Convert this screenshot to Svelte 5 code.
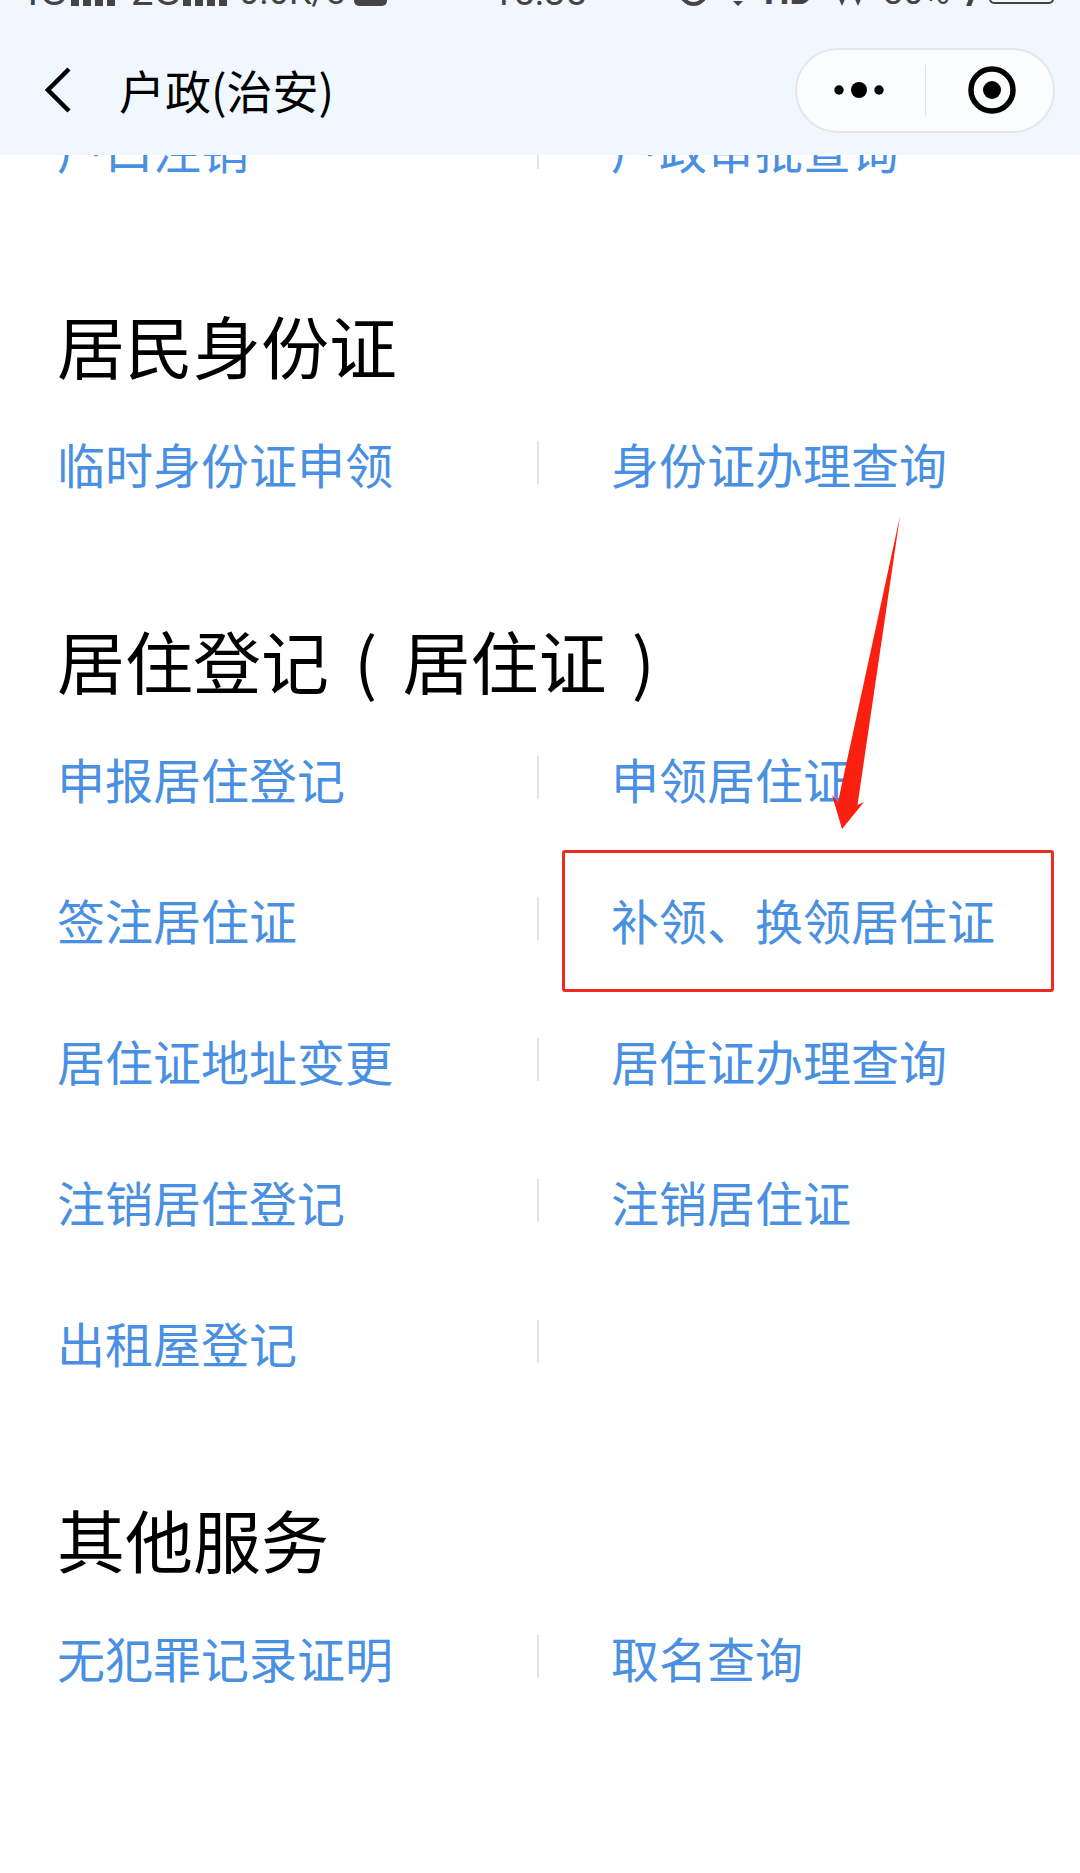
<script>
  const sections = [
    { title: '居民身份证', rows: [['临时身份证申领', '身份证办理查询']] },
    {
      title: '居住登记 ( 居住证 )',
      rows: [
        ['申报居住登记', '申领居住证'],
        ['签注居住证', '补领、换领居住证'],
        ['居住证地址变更', '居住证办理查询'],
        ['注销居住登记', '注销居住证'],
        ['出租屋登记', '']
      ]
    },
    { title: '其他服务', rows: [['无犯罪记录证明', '取名查询']] }
  ];
</script>

<div class="page">
  <header class="head">
    <div class="status">
      <span class="t4g">4G</span>
      <svg class="sig s1" viewBox="0 0 44 30"><rect x="0" y="18" width="8" height="12"/><rect x="12" y="12" width="8" height="18"/><rect x="24" y="6" width="8" height="24"/><rect x="36" y="0" width="8" height="30"/></svg>
      <span class="t2g">2G</span>
      <svg class="sig s2" viewBox="0 0 44 30"><rect x="0" y="18" width="8" height="12"/><rect x="12" y="12" width="8" height="18"/><rect x="24" y="6" width="8" height="24"/><rect x="36" y="0" width="8" height="30"/></svg>
      <span class="speed">0.0K/s</span>
      <span class="chip"></span>
      <span class="clock">15:35</span>
      <span class="ring"></span>
      <svg class="bell" viewBox="0 0 28 30"><path d="M14 0 C6 0 6 8 5 16 L0 22 L28 22 L23 16 C22 8 22 0 14 0 Z M9 25 L19 25 L14 30 Z"/></svg>
      <span class="hd">HD</span>
      <svg class="drops" viewBox="0 0 30 16"><path d="M0 0 L14 0 L7 16 Z M16 0 L30 0 L23 16 Z"/></svg>
      <span class="pct">80%</span>
      <span class="bolt"></span>
      <span class="batt"></span>
    </div>
    <div class="nav">
      <svg class="back" viewBox="0 0 26 46"><path d="M24 2 L3 23 L24 44" /></svg>
      <div class="nav-title">户政(治安)</div>
      <div class="capsule">
        <div class="cap-cell left">
          <svg class="dots" viewBox="0 0 50 16"><circle cx="5" cy="8" r="4.7"/><circle cx="25" cy="8" r="8"/><circle cx="45" cy="8" r="4.7"/></svg>
        </div>
        <div class="cap-sep"></div>
        <div class="cap-cell right">
          <svg class="target" viewBox="0 0 48 48"><circle cx="24" cy="24" r="21" class="ring-o"/><circle cx="24" cy="24" r="9"/></svg>
        </div>
      </div>
    </div>
  </header>

  <main class="content">
    <div class="row">
      <div class="cell">户口注销</div>
      <div class="cell">户政审批查询</div>
    </div>

    {#each sections as s}
      <section class="sec">
        <h2>{s.title}</h2>
        {#each s.rows as r}
          <div class="row">
            <div class="cell">{r[0]}</div>
            <div class="cell">{r[1]}</div>
          </div>
        {/each}
      </section>
    {/each}
  </main>

  <div class="redbox"></div>
  <svg class="arrow" viewBox="0 0 1080 1873"><path d="M900 516 L857.5 805 L864 802 L842 829 L832 795 L838 802 Z"/></svg>
</div>

<style>
  :global(body) { margin: 0; background: #fff; }
  .page {
    position: relative;
    width: 1080px;
    height: 1873px;
    overflow: hidden;
    background: #fff;
    font-family: "Noto Sans CJK SC", "Noto Sans", sans-serif;
  }
  .head {
    position: absolute;
    top: 0; left: 0; right: 0;
    height: 155px;
    background: #f0f7fe;
    overflow: hidden;
    z-index: 2;
  }
  .status {
    display: flex;
    align-items: flex-end;
    height: 40px;
    margin-top: -34px;
    padding-left: 17px;
    color: #444;
    font-family: "Roboto", sans-serif;
    font-size: 38px;
    line-height: 28px;
  }
  .t4g { width: 54px; font-size: 40px; }
  .sig { width: 44px; height: 30px; fill: #444; }
  .t2g { width: 52px; margin-left: 16px; font-size: 40px; }
  .speed { margin-left: 12px; width: 115px; font-size: 36px; }
  .chip { width: 33px; height: 22px; border-radius: 5px; background: #444; }
  .clock { margin-left: 105px; width: 187px; font-size: 38px; }
  .ring { width: 29px; height: 29px; border: 4px solid #444; border-radius: 50%; box-sizing: border-box; }
  .bell { width: 28px; height: 30px; fill: #444; margin-left: 16px; }
  .hd { margin-left: 12px; width: 71px; font-weight: 700; font-size: 36px; }
  .drops { width: 30px; height: 16px; fill: #444; }
  .pct { margin-left: 18px; width: 85px; font-size: 36px; }
  .bolt { width: 5px; height: 10px; background: #444; transform: skewX(-20deg); }
  .batt { width: 65px; height: 24px; border: 2.5px solid #444; border-radius: 5px; margin-left: 16px; margin-bottom: 2px; box-sizing: border-box; }

  .nav {
    display: flex;
    align-items: center;
    height: 122px;
    padding: 0 25px 0 45px;
    margin-top: 23px;
    box-sizing: border-box;
  }
  .back {
    width: 26px; height: 46px;
    fill: none; stroke: #000; stroke-width: 4.5;
  }
  .nav-title {
    flex: 1;
    margin: -2px 0 0 48px;
    font-size: 46px;
    color: #000;
    line-height: 1;
  }
  .capsule {
    display: flex;
    align-items: center;
    width: 260px;
    height: 85px;
    border: 2px solid #e3e7ea;
    border-radius: 43px;
    background: #fafcfe;
    box-sizing: border-box;
  }
  .cap-cell { flex: 1; display: flex; align-items: center; justify-content: center; }
  .cap-cell.left { flex: 0 0 128px; padding-right: 4px; box-sizing: border-box; }
  .cap-cell.right { padding-left: 4px; box-sizing: border-box; }
  .cap-sep { width: 1px; height: 51px; background: #dfe3e6; }
  .dots { width: 50px; height: 16px; fill: #000; }
  .target { width: 48px; height: 48px; fill: #000; }
  .ring-o { fill: none; stroke: #000; stroke-width: 5.5; }

  .content {
    display: flex;
    flex-direction: column;
    padding-top: 77px;
  }
  .row {
    display: grid;
    grid-template-columns: 537px 1fr;
    height: 141px;
    align-items: center;
  }
  .cell {
    height: 43px;
    display: flex;
    align-items: center;
    padding-left: 57px;
    font-size: 48px;
    line-height: 1;
    color: #4a90e2;
    white-space: nowrap;
  }
  .cell + .cell {
    border-left: 2px solid #e4e4e4;
    padding-left: 72px;
  }
  .sec { margin-top: 80px; }
  .sec h2 {
    margin: 0;
    padding-left: 57px;
    font-size: 68px;
    font-weight: 400;
    line-height: 94px;
    word-spacing: 10px;
    color: #000;
    white-space: nowrap;
  }
  .redbox {
    position: absolute;
    left: 562px; top: 850px;
    width: 492px; height: 142px;
    border: 3px solid #ee2a22;
    border-radius: 3px;
    box-sizing: border-box;
  }
  .arrow {
    position: absolute;
    left: 0; top: 0;
    width: 1080px; height: 1873px;
    fill: #fb1f10;
    pointer-events: none;
  }
</style>
